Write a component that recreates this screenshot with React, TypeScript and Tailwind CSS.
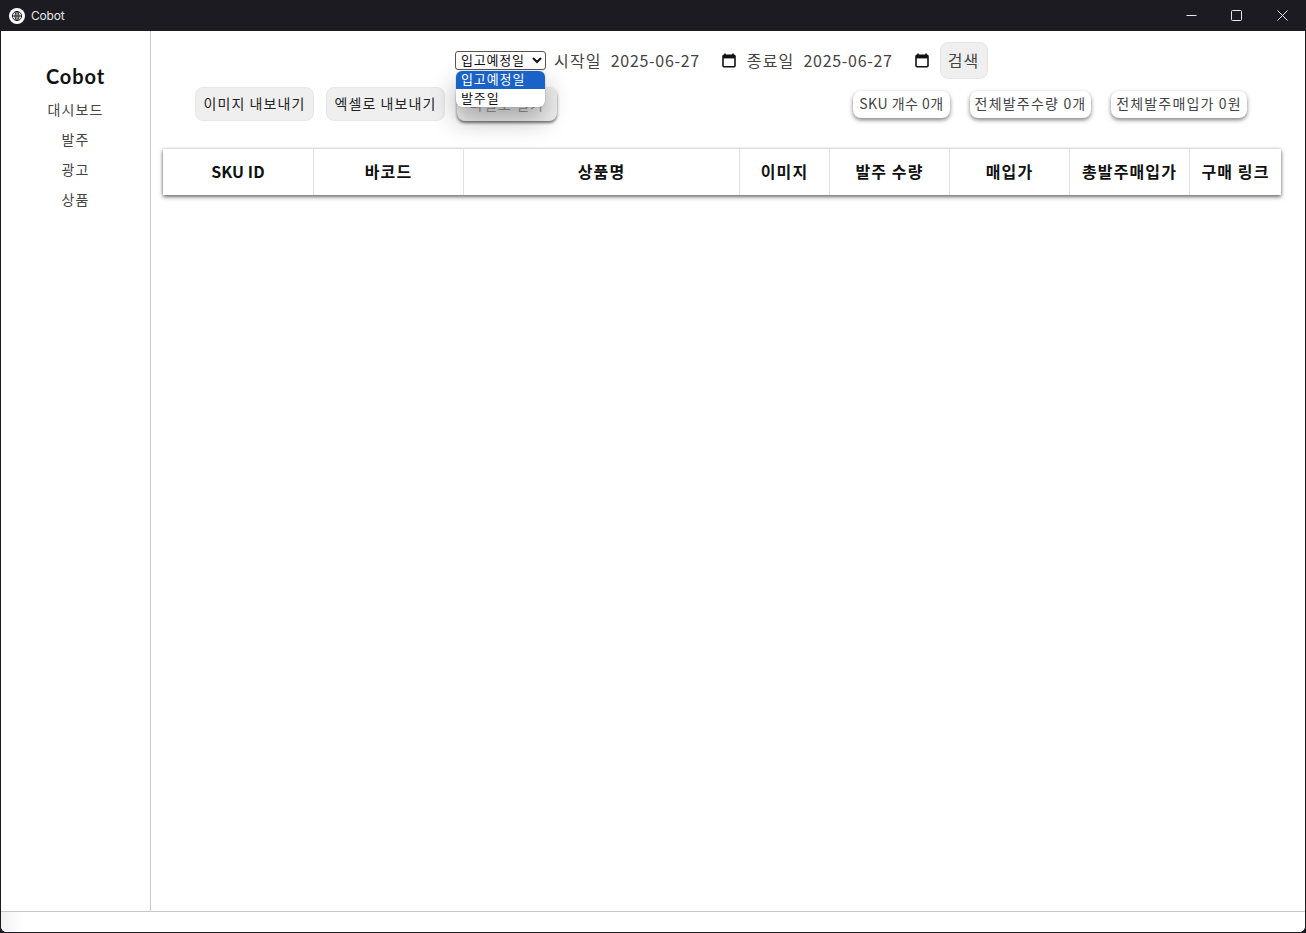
const font = "font-['Noto_Sans_CJK_KR','Noto_Sans',sans-serif]";

function Pill({ w, tracking, children }: { w: string; tracking: string; children: React.ReactNode }) {
  return (
    <div className={`${w} ${tracking} h-[27px] pb-[1px] flex items-center justify-center rounded-[8px] bg-white text-[14px] text-[#444] shadow-[0_2px_4px_rgba(0,0,0,0.5)] whitespace-nowrap`}>
      {children}
    </div>
  );
}

function ActionButton({ children }: { children: React.ReactNode }) {
  return (
    <button className="h-[34px] w-[119px] pb-[1px] rounded-[8px] bg-[#efefef] border border-[#e6e6e6] text-[14px] text-[#222] whitespace-nowrap tracking-[1.1px]">
      {children}
    </button>
  );
}

function Calendar() {
  return (
    <svg width="14" height="15" viewBox="0 0 14 15" className="shrink-0">
      <path d="M3 0.5v2M11 0.5v2" stroke="#111" strokeWidth="1.6" />
      <rect x="1" y="2.4" width="12" height="11.4" rx="1" fill="none" stroke="#111" strokeWidth="1.6" />
      <rect x="1" y="2.4" width="12" height="3" fill="#111" />
    </svg>
  );
}

function Th({ w, tracking, children }: { w: string; tracking: string; children: string }) {
  return (
    <div className={`${w} ${tracking} h-full pb-[2px] flex items-center justify-center border-r border-[#e2e2e2] last:border-r-0 text-[16px] font-bold text-[#111] whitespace-nowrap`}>
      {children}
    </div>
  );
}

export default function App() {
  return (
    <div className={`${font} w-[1306px] h-[933px] bg-[#1c1b22] overflow-hidden relative`}>
      <div className="h-[31px] flex items-center pl-[9px] text-white">
        <svg width="16" height="16" viewBox="0 0 16 16" className="shrink-0">
          <circle cx="8" cy="8" r="8" fill="#fff" />
          <circle cx="8" cy="8" r="4.6" fill="none" stroke="#1c1b22" strokeWidth="1" />
          <ellipse cx="8" cy="8" rx="2" ry="4.6" fill="none" stroke="#1c1b22" strokeWidth="1" />
          <path d="M3.4 8h9.2M8 3.4v9.2" stroke="#1c1b22" strokeWidth="1" />
        </svg>
        <span className="ml-[6px] text-[12px] text-[#e8e8e8] tracking-[-0.2px] font-['Inter',sans-serif]">Cobot</span>
        <div className="ml-auto mr-[1px] flex h-full items-center">
          <div className="w-[44px] h-full flex items-center justify-center">
            <svg width="11" height="11" viewBox="0 0 11 11"><path d="M0.5 5.5h10" stroke="#e8e8e8" /></svg>
          </div>
          <div className="w-[46px] h-full flex items-center justify-center">
            <svg width="11" height="11" viewBox="0 0 11 11"><rect x="0.5" y="0.5" width="10" height="10" rx="1" fill="none" stroke="#e8e8e8" /></svg>
          </div>
          <div className="w-[46px] h-full flex items-center justify-center">
            <svg width="11" height="11" viewBox="0 0 11 11"><path d="M0.5 0.5l10 10M10.5 0.5l-10 10" stroke="#e8e8e8" /></svg>
          </div>
        </div>
      </div>
      <div className="mx-[1px] h-[901px] rounded-b-[6px] bg-white flex flex-col overflow-hidden">
        <div className="flex h-[880px]">
          <aside className="w-[150px] shrink-0 border-r border-[#c8c8c8] flex flex-col items-center pt-[30px]">
            <div className="h-[30px] mb-[3px] flex items-center text-[20px] font-bold text-[#111] font-['Lato',sans-serif] tracking-[0.9px]">Cobot</div>
            {["대시보드", "발주", "광고", "상품"].map((t) => (
              <div key={t} className="h-[30px] flex items-center text-[14px] text-[#444] tracking-[1.1px]">{t}</div>
            ))}
          </aside>
          <main className="flex-1 relative">
            <div className="flex items-center h-[36px] mt-[11px] pl-[304px] text-[16px] text-[#444]">
              <select className="h-[19px] w-[91px] border border-[#555] rounded-[3px] text-[13px] py-0 tracking-[0.8px] text-[#111] bg-white pl-[1px] outline-none font-['Liberation_Sans','Noto_Sans_CJK_KR',sans-serif]">
                <option>입고예정일</option>
                <option>발주일</option>
              </select>
              <span className="ml-[8px] tracking-[1.2px]">시작일</span>
              <span className="ml-[9px] w-[111px] whitespace-nowrap tracking-[0.7px]">2025-06-27</span>
              <Calendar />
              <span className="ml-[11px] tracking-[1.2px]">종료일</span>
              <span className="ml-[9px] w-[111px] whitespace-nowrap tracking-[0.7px]">2025-06-27</span>
              <Calendar />
              <button className="ml-[11px] h-[37px] w-[48px] rounded-[8px] bg-[#efefef] border border-[#e6e6e6] text-[16px] text-[#444] tracking-[1px]">검색</button>
            </div>
            <div className="flex items-center mt-[9px] h-[34px] pl-[44px] pr-[58px]">
              <ActionButton>이미지 내보내기</ActionButton>
              <div className="ml-[12px]"><ActionButton>엑셀로 내보내기</ActionButton></div>
              <button className="ml-[12px] h-[34px] w-[100px] rounded-[8px] bg-[#efefef] text-[14px] text-[#999] whitespace-nowrap shadow-[0_2px_3px_rgba(0,0,0,0.55)] tracking-[1.1px]">
                파일로 열기
              </button>
              <div className="ml-auto flex items-center gap-[20px]">
                <Pill w="w-[97px]" tracking="tracking-[0.5px]">SKU 개수 0개</Pill>
                <Pill w="w-[121px]" tracking="tracking-[1.2px]">전체발주수량 0개</Pill>
                <Pill w="w-[136px]" tracking="tracking-[1.15px]">전체발주매입가 0원</Pill>
              </div>
            </div>
            <div className="ml-[12px] mr-[24px] mt-[28px] h-[46px] flex bg-white shadow-[0_2px_4px_rgba(0,0,0,0.55),0_0_3px_rgba(0,0,0,0.2)]">
              <Th w="w-[151px]" tracking="tracking-[0.1px]">SKU ID</Th>
              <Th w="w-[150px]" tracking="tracking-[1.1px]">바코드</Th>
              <Th w="w-[276px]" tracking="tracking-[1.1px]">상품명</Th>
              <Th w="w-[90px]" tracking="tracking-[1.1px]">이미지</Th>
              <Th w="w-[120px]" tracking="tracking-[1.1px]">발주 수량</Th>
              <Th w="w-[120px]" tracking="tracking-[1.1px]">매입가</Th>
              <Th w="w-[120px]" tracking="tracking-[1.1px]">총발주매입가</Th>
              <Th w="flex-1" tracking="tracking-[1.1px]">구매 링크</Th>
            </div>
            <div className="absolute left-[305px] top-[40px] w-[89px] h-[36px] rounded-[6px] bg-white overflow-hidden text-[13px] text-[#111] tracking-[0.9px] shadow-[0_0_1px_rgba(0,0,0,0.5),0_12px_26px_rgba(0,0,0,0.32)]">
              <div className="h-[18px] px-[5px] leading-[16px] bg-[#1a62c8] text-white">입고예정일</div>
              <div className="h-[18px] px-[5px] leading-[17px]">발주일</div>
            </div>
          </main>
        </div>
        <div className="flex-1 border-t border-[#c8c8c8] bg-white">
          <div className="h-full w-[24px] bg-gradient-to-r from-[#f3f3f3] to-white"></div>
        </div>
      </div>
    </div>
  );
}
